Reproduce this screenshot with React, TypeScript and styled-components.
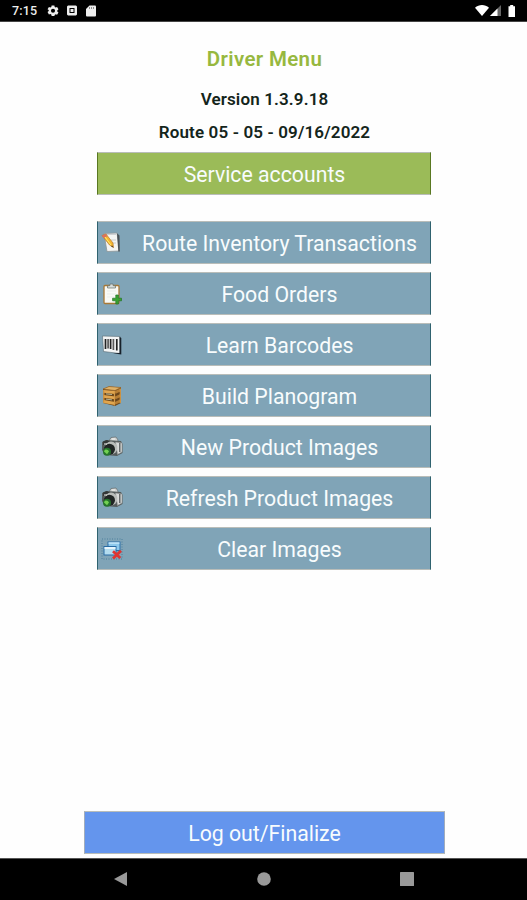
import React from 'react';
import styled, { createGlobalStyle } from 'styled-components';

const GlobalStyle = createGlobalStyle`
  * { box-sizing: border-box; }
  body { margin: 0; background: #fefefe; font-family: Roboto, "Liberation Sans", sans-serif; }
`;

const Screen = styled.div`
  display: flex;
  flex-direction: column;
  width: 527px;
  height: 900px;
  background: #fefefe;
`;

const StatusBar = styled.header`
  display: flex;
  align-items: center;
  height: 22px;
  padding: 0 10px 0 12px;
  background: #000;
  border-bottom: 1px solid #454545;
  color: #eee;
`;

const Clock = styled.span`
  width: 35px;
  font-size: 12.5px;
  font-weight: 500;
  letter-spacing: 0.2px;
  line-height: 20px;
`;

const StatusIcons = styled.div<{ $gap: number }>`
  display: flex;
  align-items: center;
  gap: ${(p) => p.$gap}px;
  svg { display: block; }
`;

const Spacer = styled.div`
  flex: 1;
`;

const Content = styled.main`
  display: flex;
  flex: 1;
  flex-direction: column;
  align-items: center;
  padding: 23px 0 4px 1px;
`;

const Title = styled.h1`
  margin: 0 0 4px;
  padding-left: 1px;
  height: 29px;
  line-height: 29px;
  font-size: 20.5px;
  font-weight: 600;
  letter-spacing: 0.35px;
  color: #97b83f;
`;

const InfoLine = styled.p`
  margin: 9px 0 0;
  padding-left: 1px;
  height: 24px;
  line-height: 24px;
  font-size: 17px;
  font-weight: 600;
  letter-spacing: 0.14px;
  color: #14251b;
`;

const tones = {
  green: { fill: '#9bbb58', side: '#597821' },
  steel: { fill: '#80a4b7', side: '#2f626f' },
  blue: { fill: '#6495ed', side: '#a2adbc' },
};

const ActionButton = styled.button<{ $tone: keyof typeof tones; $wide?: boolean }>`
  display: flex;
  align-items: center;
  width: ${(p) => (p.$wide ? 361 : 334)}px;
  height: 43px;
  padding: 0;
  border: 1px solid #b9bdb9;
  border-left-color: ${(p) => tones[p.$tone].side};
  border-right-color: ${(p) => tones[p.$tone].side};
  background: ${(p) => tones[p.$tone].fill};
  color: #f8fcfd;
  font-family: inherit;
  font-size: 21.25px;
`;

const ButtonLabel = styled.span`
  flex: 1;
  padding: 2px 0 0 1px;
  text-align: center;
  white-space: nowrap;
  line-height: 39px;
`;

const IconSlot = styled.span`
  display: flex;
  width: 30px;
  padding-left: 3px;
  svg { display: block; }
`;

const ServiceSlot = styled.div`
  margin: 8px 0 26px;
`;

const MenuList = styled.nav`
  display: flex;
  flex-direction: column;
  gap: 8px;
`;

const NavBar = styled.footer`
  display: flex;
  align-items: center;
  justify-content: space-between;
  height: 42px;
  padding: 0 113px 1px 114px;
  background: #000;
  border-top: 1px solid #555;
  svg { display: block; }
`;

const Icon = ({ children }: { children: React.ReactNode }) => (
  <svg width="22" height="22" viewBox="0 0 22 22">{children}</svg>
);

const NotepadIcon = () => (
  <Icon>
    <path d="M3 1.5 L16 1 L18.5 19 L6 19.5 Z" fill="#f4f5f3" stroke="#8e9697" strokeWidth=".8" />
    <path d="M16 1.2 L18.5 3.5 L18.8 19.5 L17.3 19.5 Z" fill="#485157" />
    <path d="M4 2.4h11M10 8h5M11 11h4" stroke="#bcc3c6" strokeWidth=".8" />
    <path d="M1 3.5 L5 2 L12 11 L12.5 15.5 L8.5 13 Z" fill="#f3b433" stroke="#ad6f22" strokeWidth=".6" />
    <path d="M.8 3.5 L4.7 2 L6.4 4.2 L2.4 6.2 Z" fill="#db725b" />
    <path d="M4 5 L10 13" stroke="#fff06d" strokeWidth="1" />
    <path d="M11.2 13.5 L12.6 15.7 L10 14.2 Z" fill="#443322" />
  </Icon>
);

const ClipboardIcon = () => (
  <Icon>
    <rect x="3" y="2.5" width="15" height="18" rx="1" fill="#fafaf5" stroke="#a87937" strokeWidth="1.3" />
    <path d="M6.5 5V3L9 2.5V1h3v1.5l2.5.5v2Z" fill="#d9dedb" stroke="#66716d" strokeWidth=".7" />
    <path d="M6 8h9M6 11h9M6 14h7" stroke="#e4e7e7" strokeWidth=".7" />
    <path d="M14.8 12h2.6v3.2h3.1v2.6h-3.1V21h-2.6v-3.2h-3.2v-2.6h3.2Z" fill="#39a32f" stroke="#237326" strokeWidth=".7" />
  </Icon>
);

const BarcodeIcon = () => (
  <Icon>
    <path d="M1.5 2 L19 2.5 L19 19.5 L2.5 17.5 Z" fill="#f4f5f5" stroke="#566870" strokeWidth=".6" />
    <path d="M18.5 2.7 L20.3 4 V20.5 L12 19.2 L18.5 19 Z" fill="#17212a" />
    <path d="M4.5 5V15M9.6 5V15M15.8 5V16.5" stroke="#222" strokeWidth="1.7" />
    <path d="M7.1 5V14.5M12.4 5V16" stroke="#5a5a5a" strokeWidth="1.7" />
  </Icon>
);

const CrateIcon = () => (
  <Icon>
    <path d="M2 4 L8 1.5 L20 2.5 L20 18 L14 21 L2 18 Z" fill="#6b461b" />
    <path d="M2 4 L8 1.5 L20 2.5 L14 5.5 Z" fill="#dfb167" stroke="#936023" strokeWidth=".6" />
    <path d="M2.5 6.3 L14 7.5 M2.5 11.3 L14 12.8 M2.5 16.5 L14 18.5" stroke="#e1a64f" strokeWidth="2.8" />
    <path d="M14 7.5 L19.5 5 M14 13 L19.5 10.5 M14 18.4 L19.5 15.8" stroke="#b77e34" strokeWidth="2.7" />
    <path d="M2.8 5V18M13.5 6V20.5M19.3 3.5V18" stroke="#d39a48" strokeWidth="1.2" />
    <path d="M5 8.9 L11 9.5M5 14.1 L11 14.9" stroke="#b5b494" strokeWidth="1" />
  </Icon>
);

const CameraIcon = () => (
  <Icon>
    <path d="M8 5 L10 1.5 L15 1 L17 4 L16 8 L8 8 Z" fill="#cfd2d1" stroke="#626a6b" strokeWidth=".7" />
    <path d="M1 6 L5 4 L20 5 L21.5 8 V17 L16 20 L4 19 L1 14 Z" fill="#555c5c" />
    <path d="M2 5.5 L6 4 L9 6 L7 9 L2 9Z" fill="#343838" />
    <path d="M14.5 6 L21 7 V16 L16.5 18.5 Z" fill="#d8dad9" stroke="#8b8e8e" strokeWidth=".6" />
    <path d="M18.8 7 V16" stroke="#55595a" strokeWidth="1.3" />
    <circle cx="10" cy="12" r="6.4" fill="#b9bcb9" />
    <circle cx="8.4" cy="13.3" r="5.6" fill="#202524" />
    <circle cx="6" cy="15.7" r="4" fill="#26742c" />
    <path d="M3 15.5 C4 12.5 7 13.5 8 15.5 L6 18.3 Z" fill="#73d253" />
    <path d="M11 3h3M3 8h3" stroke="#f3f3ef" strokeWidth="1" />
  </Icon>
);

const ClearIcon = () => (
  <Icon>
    <rect x="1" y="1" width="20" height="20" fill="none" stroke="#3f7795" strokeWidth=".8" strokeDasharray="1 1.5" />
    <rect x="7" y="4" width="12" height="8.5" fill="#8ec9ec" stroke="#2b6ea8" />
    <path d="M7.5 5h11" stroke="#d9f4ff" strokeWidth="1.2" />
    <rect x="3" y="8.5" width="12" height="8.5" fill="#b3dcef" stroke="#286ba4" />
    <path d="M3.5 10h11" stroke="#f1fbff" strokeWidth="1.7" />
    <path d="M12 13.3 L19.3 20M20 12.7 L12 20.5" stroke="#df3431" strokeWidth="2.8" />
  </Icon>
);

const items = [
  { label: 'Route Inventory Transactions', Glyph: NotepadIcon },
  { label: 'Food Orders', Glyph: ClipboardIcon },
  { label: 'Learn Barcodes', Glyph: BarcodeIcon },
  { label: 'Build Planogram', Glyph: CrateIcon },
  { label: 'New Product Images', Glyph: CameraIcon },
  { label: 'Refresh Product Images', Glyph: CameraIcon },
  { label: 'Clear Images', Glyph: ClearIcon },
];

export default function App() {
  return (
    <>
      <GlobalStyle />
      <Screen>
        <StatusBar>
          <Clock>7:15</Clock>
          <StatusIcons $gap={8}>
            <svg width="12" height="11" viewBox="0 0 24 24">
              <path fill="#eee" fillRule="evenodd" d="M9 1h6l.7 3.4 2 1.2 3.2-1.1 3 5-2.6 2.4v2.2l2.6 2.4-3 5-3.2-1.1-2 1.2L15 24H9l-.7-3.4-2-1.2-3.2 1.1-3-5 2.6-2.4v-2.2L.1 9.5l3-5 3.2 1.1 2-1.2ZM12 8a4.5 4.5 0 1 0 0 9 4.5 4.5 0 1 0 0-9Z" />
            </svg>
            <svg width="10" height="11" viewBox="0 0 10 11">
              <path fill="#eee" fillRule="evenodd" d="M1 .5h8l1 1v8l-1 1H1l-1-1v-8ZM2.5 3v5h5V3Z" />
              <rect x="3.5" y="4" width="3" height="3" fill="#eee" />
            </svg>
            <svg width="12" height="12" viewBox="0 0 12 12">
              <path d="M4.5.5H10q1 0 1 1v9q0 1-1 1H2q-1 0-1-1V4Z" fill="#eee" />
              <path d="M4.5 2v2M6.5 2v2M8.5 2v2" stroke="#777" strokeWidth=".8" />
            </svg>
          </StatusIcons>
          <Spacer />
          <StatusIcons $gap={1}>
            <svg width="14" height="11" viewBox="0 0 14 11"><path d="M0 2.8C4-.8 10-.8 14 2.8L7 11Z" fill="#fff" /></svg>
            <svg width="12" height="11" viewBox="0 0 12 11">
              <path d="M0 11 11 0v11Z" fill="#666" />
              <path d="M0 11 7.5 3.5V11Z" fill="#fff" />
            </svg>
            <svg width="14" height="12" viewBox="0 0 14 12"><path d="M5.5 1.3h1.7V0h3v1.3H12V12H5.5Z" fill="#fff" /></svg>
          </StatusIcons>
        </StatusBar>
        <Content>
          <Title>Driver Menu</Title>
          <InfoLine>Version 1.3.9.18</InfoLine>
          <InfoLine>Route 05 - 05 - 09/16/2022</InfoLine>
          <ServiceSlot>
            <ActionButton $tone="green">
              <ButtonLabel>Service accounts</ButtonLabel>
            </ActionButton>
          </ServiceSlot>
          <MenuList>
            {items.map(({ label, Glyph }) => (
              <ActionButton key={label} $tone="steel">
                <IconSlot><Glyph /></IconSlot>
                <ButtonLabel>{label}</ButtonLabel>
              </ActionButton>
            ))}
          </MenuList>
          <Spacer />
          <ActionButton $tone="blue" $wide>
            <ButtonLabel>Log out/Finalize</ButtonLabel>
          </ActionButton>
        </Content>
        <NavBar>
          <svg width="14" height="14" viewBox="0 0 14 14"><path d="M0 7 13 0v14Z" fill="#999" /></svg>
          <svg width="14" height="14" viewBox="0 0 14 14"><circle cx="7" cy="7" r="6.8" fill="#999" /></svg>
          <svg width="14" height="14" viewBox="0 0 14 14"><rect width="14" height="14" rx=".5" fill="#999" /></svg>
        </NavBar>
      </Screen>
    </>
  );
}
